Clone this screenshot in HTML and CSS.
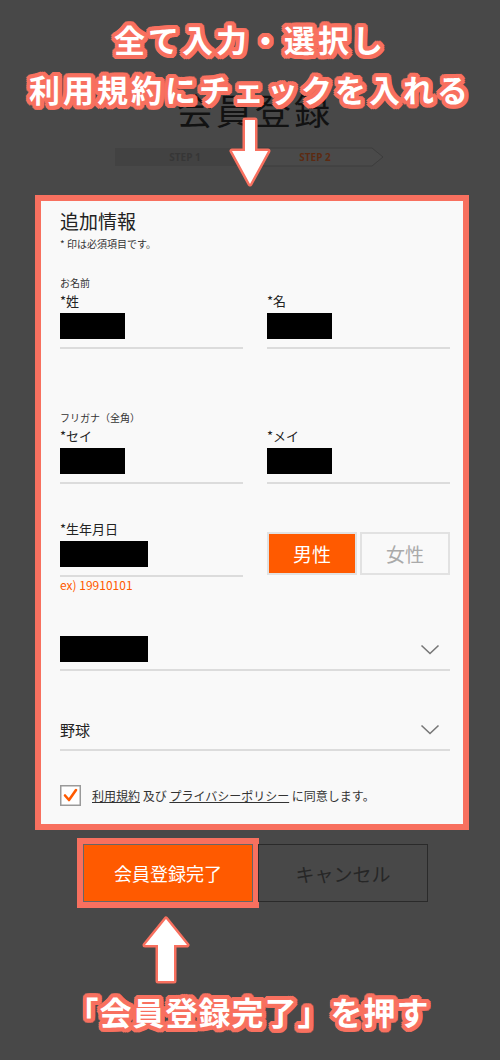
FILE: index.html
```html
<!DOCTYPE html>
<html lang="ja">
<head>
    <meta charset="UTF-8">
    <meta name="viewport" content="width=device-width, initial-scale=1.0">
    <title>会員登録</title>
    <link rel="stylesheet" href="styles.css">
</head>
<body>
    <div class="page">
        <!-- 背景の登録画面（暗く表示） -->
        <div class="page-head">
            <h1 class="page-title">会員登録</h1>
            <svg class="steps" width="270" height="20" viewBox="0 0 270 20">
                <rect x="0" y="1" width="134" height="18" fill="#424242"/>
                <polygon points="134,1 257,1 268,10 257,19 134,19" fill="#4a4a4a" stroke="#3c3c3c" stroke-width="1"/>
                <text x="70" y="14" text-anchor="middle" class="step-text step-off">STEP 1</text>
                <text x="200" y="14" text-anchor="middle" class="step-text step-on">STEP 2</text>
            </svg>
        </div>

        <!-- 追加情報フォーム（強調） -->
        <div class="card">
            <h2 class="card-title">追加情報</h2>
            <p class="card-note">* 印は必須項目です。</p>

            <div class="group group-name">
                <div class="group-label">お名前</div>
                <div class="row">
                    <div class="field">
                        <div class="field-label">*姓</div>
                        <div class="input"><span class="redact"></span></div>
                    </div>
                    <div class="field">
                        <div class="field-label">*名</div>
                        <div class="input"><span class="redact"></span></div>
                    </div>
                </div>
            </div>

            <div class="group group-kana">
                <div class="group-label">フリガナ（全角）</div>
                <div class="row">
                    <div class="field">
                        <div class="field-label">*セイ</div>
                        <div class="input"><span class="redact"></span></div>
                    </div>
                    <div class="field">
                        <div class="field-label">*メイ</div>
                        <div class="input"><span class="redact"></span></div>
                    </div>
                </div>
            </div>

            <div class="group group-birth">
                <div class="row">
                    <div class="field">
                        <div class="field-label">*生年月日</div>
                        <div class="input"><span class="redact redact-wide"></span></div>
                        <div class="hint">ex) 19910101</div>
                    </div>
                    <div class="gender">
                        <button class="gender-btn active">男性</button>
                        <button class="gender-btn">女性</button>
                    </div>
                </div>
            </div>

            <div class="select select-first">
                <span class="redact redact-wide"></span>
                <svg class="chevron" width="20" height="11" viewBox="0 0 20 11"><polyline points="1.5,1.5 10,9.5 18.5,1.5" fill="none" stroke="#777" stroke-width="1.6"/></svg>
            </div>

            <div class="select select-second">
                <span class="select-value">野球</span>
                <svg class="chevron" width="20" height="11" viewBox="0 0 20 11"><polyline points="1.5,1.5 10,9.5 18.5,1.5" fill="none" stroke="#777" stroke-width="1.6"/></svg>
            </div>

            <div class="agree">
                <svg class="checkbox" width="21" height="21" viewBox="0 0 21 21">
                    <rect x="0.75" y="0.75" width="19.5" height="19.5" fill="#fff" stroke="#9a9a9a" stroke-width="1.5"/>
                    <polyline points="5,10.5 9,15 16,5" fill="none" stroke="#ff5a00" stroke-width="2.6" stroke-linecap="round" stroke-linejoin="round"/>
                </svg>
                <span class="agree-text"><a href="#">利用規約</a> 及び <a href="#">プライバシーポリシー</a> に同意します。</span>
            </div>
        </div>

        <div class="actions">
            <button class="btn btn-submit">会員登録完了</button>
            <button class="btn btn-cancel">キャンセル</button>
        </div>

        <!-- 下の説明 -->
        <div class="guide-bottom">
            <svg class="arrow-up" width="48" height="74" viewBox="0 0 48 74">
                <polygon points="24,5 45,31 32,31 32,67 16,67 16,31 3,31" fill="#fff" stroke="#f8705f" stroke-width="5" stroke-linejoin="round" paint-order="stroke"/>
            </svg>
            <div class="guide-text">「会員登録完了」を押す</div>
        </div>

        <!-- 上の説明（画面に重ねる） -->
        <div class="guide-top">
            <div class="guide-text">全て入力・選択し</div>
            <div class="guide-text">利用規約にチェックを入れる</div>
        </div>
        <svg class="arrow-down" width="44" height="72" viewBox="0 0 44 72">
            <polygon points="17,4 27,4 27,35 40,35 22,68 4,35 17,35" fill="#fff" stroke="#f8705f" stroke-width="5" stroke-linejoin="round" paint-order="stroke"/>
        </svg>
    </div>
</body>
</html>
```

FILE: styles.css
```css
* {
    margin: 0;
    padding: 0;
    box-sizing: border-box;
}

body {
    font-family: 'Noto Sans CJK JP', 'Noto Sans', sans-serif;
    background: #484848;
    color: #333;
}

.page {
    position: relative;
    width: 500px;
    height: 1060px;
    overflow: hidden;
}

/* 背景の画面 */
.page-head {
    display: flex;
    flex-direction: column;
    align-items: center;
    padding-top: 88px;
    height: 195px;
}

.page-title {
    font-size: 36px;
    line-height: 42px;
    font-weight: 400;
    color: #121212;
    letter-spacing: 3px;
    margin-left: 10px;
}

.steps {
    display: block;
    margin-top: 17px;
    margin-left: -1px;
}

.step-text {
    font-family: 'Open Sans', 'Noto Sans', sans-serif;
    font-size: 10px;
    font-weight: 700;
}

.step-off {
    fill: #363636;
}

.step-on {
    fill: #5c2a12;
}

/* フォーム */
.card {
    margin: 0 31px 0 35px;
    border: 6px solid #f8705f;
    background: #f9f9f9;
    padding: 7px 13px 18px 19px;
}

.card-title {
    font-size: 19px;
    line-height: 26px;
    font-weight: 400;
    color: #222;
}

.card-note {
    font-size: 10px;
    line-height: 14px;
    margin-top: 3px;
    color: #333;
}

.group-name {
    margin-top: 25px;
}

.group-kana {
    margin-top: 62px;
}

.group-birth {
    margin-top: 36px;
}

.group-label {
    font-size: 10px;
    line-height: 14px;
    color: #333;
    margin-bottom: 2px;
}

.row {
    display: grid;
    grid-template-columns: 1fr 1fr;
    column-gap: 24px;
}

.field-label {
    font-size: 13px;
    line-height: 18px;
    color: #222;
}

.input {
    padding: 3px 0 8px;
    border-bottom: 2px solid #dcdcdc;
}

.redact {
    display: block;
    width: 65px;
    height: 26px;
    background: #000;
}

.redact-wide {
    width: 88px;
}

.hint {
    font-size: 12px;
    line-height: 16px;
    color: #ff5a00;
}

.gender {
    display: flex;
    gap: 3px;
    margin-top: 12px;
    height: 43px;
}

.gender-btn {
    flex: 1;
    font-family: inherit;
    font-size: 19px;
    border: 2px solid #e2e2e2;
    background: #f9f9f9;
    color: #aaa;
}

.gender-btn.active {
    background: #ff5a00;
    color: #fff;
}

.select {
    display: flex;
    align-items: center;
    justify-content: space-between;
    height: 42px;
    border-bottom: 2px solid #dcdcdc;
    padding-right: 10px;
}

.select-first {
    margin-top: 36px;
}

.select-second {
    margin-top: 38px;
}

.select-value {
    font-size: 15px;
    color: #222;
}

.chevron {
    display: block;
}

.agree {
    display: flex;
    align-items: center;
    gap: 11px;
    margin-top: 34px;
    height: 21px;
}

.checkbox {
    display: block;
}

.agree-text {
    font-size: 12px;
    color: #333;
}

.agree-text a {
    color: #333;
    text-decoration: underline;
}

/* ボタン */
.actions {
    display: flex;
    gap: 5px;
    margin: 14px 0 0 83px;
}

.btn {
    width: 170px;
    height: 58px;
    font-family: inherit;
    font-size: 18px;
}

.btn-submit {
    background: #ff5a00;
    color: #fff;
    border: 1px solid #666;
    outline: 6px solid #f8705f;
}

.btn-cancel {
    background: #484848;
    color: #262626;
    border: 1px solid #2a2a2a;
    font-size: 19px;
}

/* 説明 */
.guide-text {
    font-size: 30px;
    line-height: 50px;
    font-weight: 700;
    color: #fff;
    text-align: center;
    text-shadow:
        4px 0 #f8705f, -4px 0 #f8705f, 0 4px #f8705f, 0 -4px #f8705f,
        3px 3px #f8705f, -3px 3px #f8705f, 3px -3px #f8705f, -3px -3px #f8705f,
        4px 2px #f8705f, 4px -2px #f8705f, -4px 2px #f8705f, -4px -2px #f8705f,
        2px 4px #f8705f, -2px 4px #f8705f, 2px -4px #f8705f, -2px -4px #f8705f;
}

.guide-bottom {
    margin-top: 12px;
}

.arrow-up {
    display: block;
    margin-left: 142px;
}

.guide-bottom .guide-text {
    font-size: 32px;
    line-height: 40px;
    letter-spacing: 1px;
    margin-top: 3px;
    margin-left: -4px;
}

.guide-top {
    position: absolute;
    top: 14px;
    left: 0;
    width: 100%;
}

.guide-top .guide-text {
    font-size: 31px;
    letter-spacing: 3px;
}

.arrow-down {
    position: absolute;
    top: 116px;
    left: 228px;
}
```
